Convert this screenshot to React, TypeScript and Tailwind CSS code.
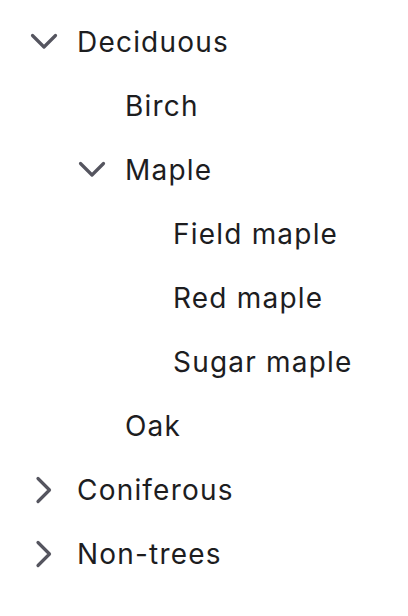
import React from "react";

type Node = { label: string; children?: Node[]; open?: boolean };

const tree: Node[] = [
  {
    label: "Deciduous",
    open: true,
    children: [
      { label: "Birch" },
      {
        label: "Maple",
        open: true,
        children: [{ label: "Field maple" }, { label: "Red maple" }, { label: "Sugar maple" }],
      },
      { label: "Oak" },
    ],
  },
  { label: "Coniferous", open: false, children: [{ label: "Pine" }] },
  { label: "Non-trees", open: false, children: [{ label: "Fern" }] },
];

function Chevron({ open }: { open: boolean }) {
  return (
    <svg width="32" height="32" viewBox="0 0 32 32" fill="none" className="shrink-0">
      <path
        d={open ? "M4.5 9.5 L16 21 L27.5 9.5" : "M10 4.5 L21.5 16 L10 27.5"}
        stroke="#55555f"
        strokeWidth="3.2"
        strokeLinecap="round"
        strokeLinejoin="round"
      />
    </svg>
  );
}

const pads = ["pl-[28px]", "pl-[76px]", "pl-[124px]"];

function Rows({ nodes, level }: { nodes: Node[]; level: number }) {
  return (
    <>
      {nodes.map((n) => (
        <React.Fragment key={n.label}>
          <div className={`flex h-16 items-center ${pads[level]}`}>
            {n.children ? <Chevron open={!!n.open} /> : <div className="w-8 shrink-0" />}
            <span className="ml-[17px] text-[28px] leading-none tracking-[1.2px] text-[#1d1d1f]">{n.label}</span>
          </div>
          {n.children && n.open && <Rows nodes={n.children} level={level + 1} />}
        </React.Fragment>
      ))}
    </>
  );
}

export default function App() {
  return (
    <div className="w-[408px] h-[616px] bg-white pt-[10px]" style={{ fontFamily: "Inter, sans-serif" }}>
      <Rows nodes={tree} level={0} />
    </div>
  );
}
